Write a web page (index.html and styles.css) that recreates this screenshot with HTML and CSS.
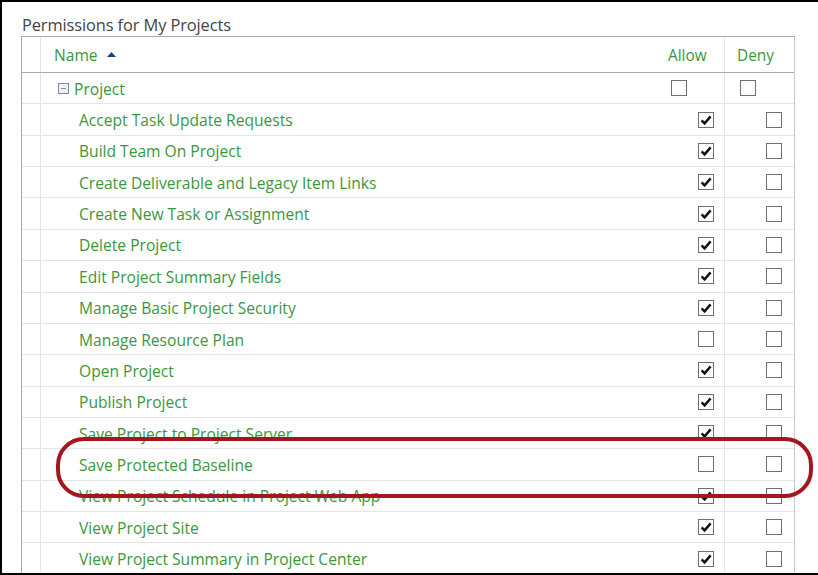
FILE: index.html
```html
<!DOCTYPE html>
<html>
<head>
<meta charset="utf-8">
<link rel="stylesheet" href="styles.css">
</head>
<body>
<div class="frame">
  <h1 class="title">Permissions for My Projects</h1>
  <div class="grid">
    <div class="row head">
      <div class="gut"></div>
      <div class="name">Name <svg class="sort" viewBox="0 0 9 5" width="9" height="5"><path d="M0 5 L4.5 0 L9 5 Z" fill="#1a3b8f"/></svg></div>
      <div class="col allow">Allow</div>
      <div class="col deny">Deny</div>
    </div>
    <div class="row group">
      <div class="gut"></div>
      <div class="name"><span class="collapse"></span>Project</div>
      <div class="col allow"><span class="cb"></span></div>
      <div class="col deny"><span class="cb"></span></div>
    </div>
    <div id="rows"></div>
  </div>
  <div class="annot"></div>
</div>
<script>
var items = [
  ["Accept Task Update Requests",1],
  ["Build Team On Project",1],
  ["Create Deliverable and Legacy Item Links",1],
  ["Create New Task or Assignment",1],
  ["Delete Project",1],
  ["Edit Project Summary Fields",1],
  ["Manage Basic Project Security",1],
  ["Manage Resource Plan",0],
  ["Open Project",1],
  ["Publish Project",1],
  ["Save Project to Project Server",1],
  ["Save Protected Baseline",0],
  ["View Project Schedule in Project Web App",1],
  ["View Project Site",1],
  ["View Project Summary in Project Center",1]
];
var check = '<svg viewBox="0 0 14 14" width="14" height="14"><path d="M2.6 7.4 L5.6 10.4 L11.6 3.4" fill="none" stroke="#111" stroke-width="2.4" stroke-linejoin="miter" stroke-linecap="butt"/></svg>';
var html = "";
items.forEach(function(it){
  html += '<div class="row item"><div class="gut"></div><div class="name">' + it[0] + '</div>' +
    '<div class="col allow"><span class="cb">' + (it[1] ? check : '') + '</span></div>' +
    '<div class="col deny"><span class="cb"></span></div></div>';
});
document.getElementById("rows").innerHTML = html;
</script>
</body>
</html>
```

FILE: styles.css
```css
html, body {
  margin: 0;
  padding: 0;
  background: #fff;
}
body {
  width: 818px;
  height: 575px;
  overflow: hidden;
  font-family: "Open Sans", "Noto Sans", sans-serif;
}
.frame {
  position: relative;
  box-sizing: border-box;
  width: 818px;
  height: 575px;
  border-top: 2px solid #000;
  border-left: 2px solid #000;
  border-bottom: 2px solid #000;
  padding: 0 0 0 19px;
  overflow: hidden;
}
.title {
  margin: 0;
  padding: 13px 0 0 1px;
  height: 21px;
  font-size: 16.4px;
  font-weight: normal;
  line-height: 20px;
  color: #444;
  letter-spacing: -0.1px;
}
.grid {
  width: 774px;
  box-sizing: border-box;
  border-top: 1px solid #a9a9a9;
  border-left: 1px solid #a9a9a9;
  border-right: 1px solid #c8c8c8;
}
.row {
  display: grid;
  grid-template-columns: 19px 616px 67px 70px;
  box-sizing: border-box;
  height: 31.36px;
  border-bottom: 1px solid #e4e4e4;
  font-size: 15.6px;
  color: #3b973b;
}
.row.head {
  height: 36px;
  border-bottom: 1px solid #aaa;
}
.gut {
  border-right: 1px solid #e4e4e4;
}
.name {
  display: flex;
  align-items: center;
  white-space: nowrap;
  padding-top: 1px;
}
.head .name { padding-left: 13px; font-size: 15.6px; }
.group .name { padding-left: 17px; }
.item .name { padding-left: 38px; }
.col {
  display: flex;
  align-items: center;
}
.deny { border-left: 1px solid #e4e4e4; }
.head .col { font-size: 15.4px; padding-top: 1px; }
.head .allow { padding-left: 11px; }
.head .deny { padding-left: 12px; }
.group .allow { padding-left: 14px; }
.group .deny { padding-left: 15px; }
.item .col { justify-content: flex-end; padding-right: 10px; }
.item .deny { padding-right: 12px; }
.sort {
  margin-left: 9px;
  margin-top: -2px;
}
.collapse {
  display: inline-block;
  width: 9px;
  height: 9px;
  border: 1px solid #7e8aa0;
  background: linear-gradient(#7e8aa0, #7e8aa0) center / 5px 1px no-repeat, #eef0f4;
  margin-right: 5px;
}
.cb {
  display: inline-flex;
  align-items: center;
  justify-content: center;
  box-sizing: border-box;
  width: 16px;
  height: 16px;
  border: 1px solid #707070;
  background: #fff;
}
.annot {
  position: absolute;
  left: 54px;
  top: 435px;
  width: 757px;
  height: 61px;
  box-sizing: border-box;
  border: 4px solid #a4161f;
  border-radius: 28px;
}
```
